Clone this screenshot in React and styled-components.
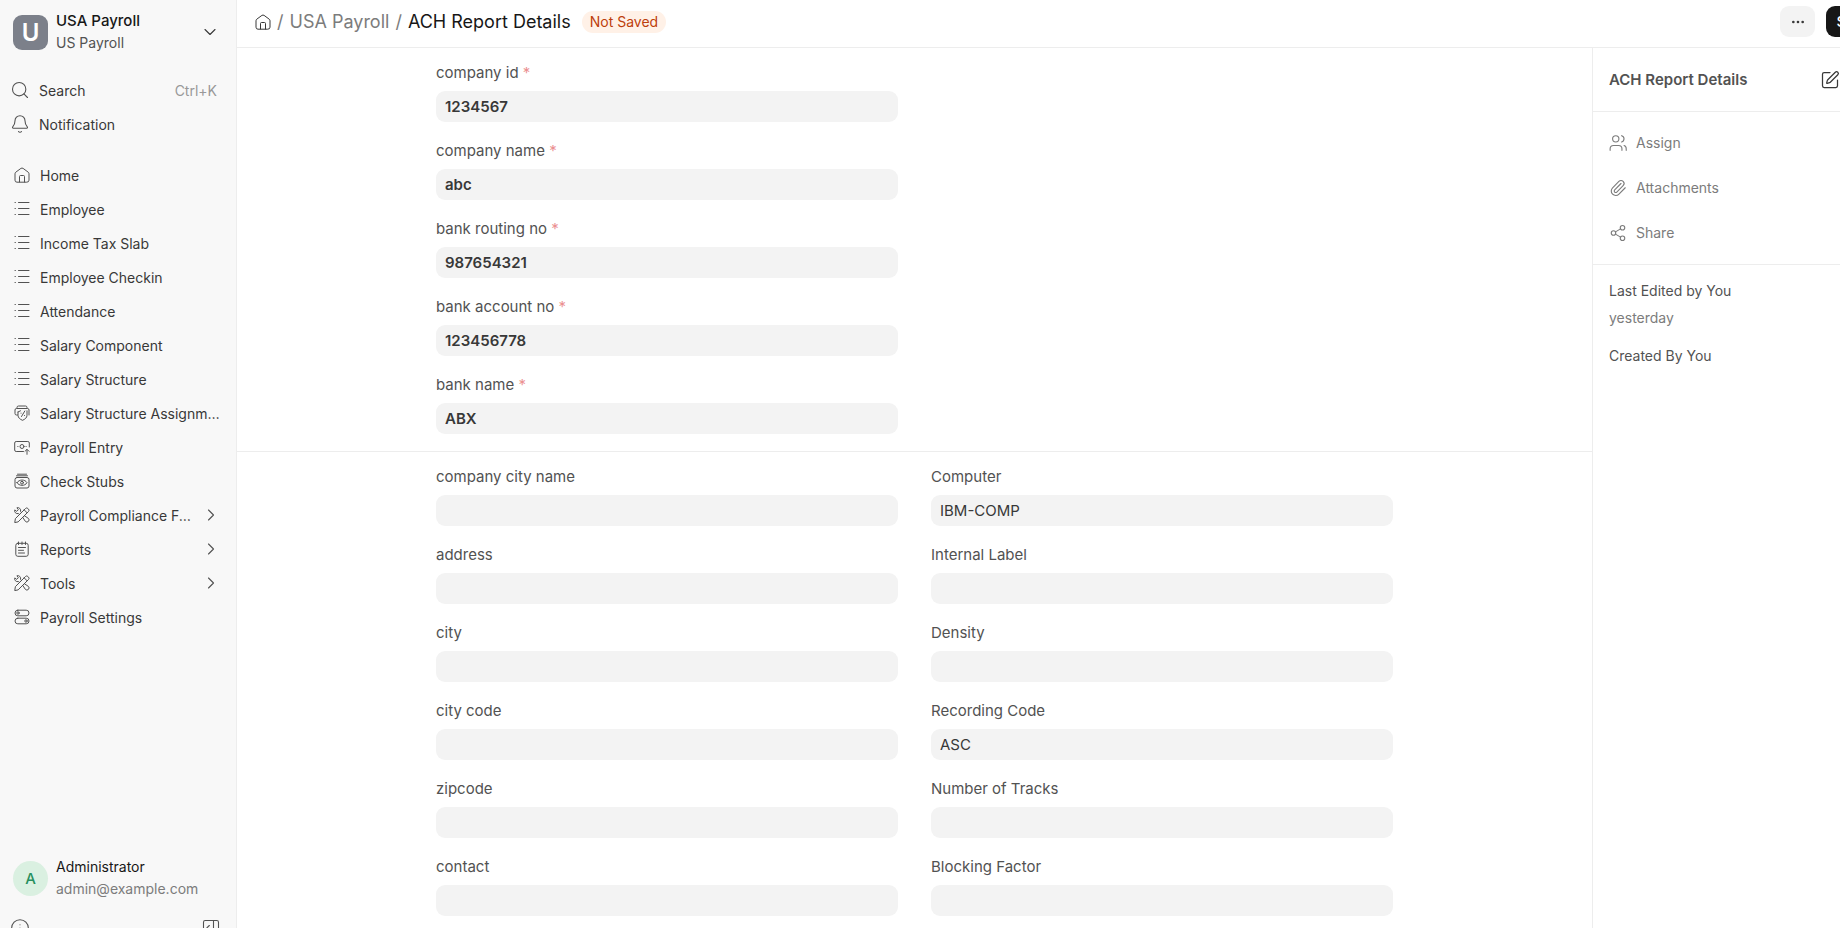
import styled, { createGlobalStyle } from "styled-components";
import { useState } from "react";
import {
  Bell,
  ChevronDown,
  ChevronRight,
  Ellipsis,
  Info,
  PanelRightOpen,
  Paperclip,
  Search,
  Share2,
  SquarePen,
} from "lucide-react";

const GlobalStyle = createGlobalStyle`
  *,
  *::before,
  *::after {
    box-sizing: border-box;
  }

  body {
    margin: 0;
    background: #fff;
    color: #383838;
    font-family: Inter, "Liberation Sans", sans-serif;
    font-size: 14px;
    overflow: hidden;
  }

  button,
  input {
    font: inherit;
    color: inherit;
  }

  button {
    border: 0;
    padding: 0;
    background: none;
    cursor: pointer;
    text-align: left;
  }

  a {
    color: inherit;
    text-decoration: none;
  }
`;

const Layout = styled.div`
  display: flex;
  height: 100vh;
  overflow: hidden;
`;

/* ---------- sidebar ---------- */

const Sidebar = styled.aside`
  display: flex;
  flex-direction: column;
  flex: 0 0 237px;
  background: #f8f8f8;
  border-right: 1px solid #ededed;
  overflow: hidden;
`;

const Account = styled.button`
  display: flex;
  align-items: center;
  gap: 8px;
  flex: none;
  padding: 0 16px 0 13px;
`;

const WorkspaceSwitch = styled(Account)`
  padding-top: 10px;
  margin-bottom: 19px;
`;

const UserButton = styled(Account)`
  margin-top: auto;
  margin-bottom: 18px;
`;

const Logo = styled.span`
  display: grid;
  place-items: center;
  flex: none;
  width: 35px;
  height: 35px;
  border-radius: 9px;
  background: #7c808a;
  color: #fff;
  font-size: 24px;
  font-weight: 600;
`;

const Avatar = styled(Logo)`
  border-radius: 50%;
  background: #daf0e1;
  color: #278f5e;
  font-size: 15px;
  font-weight: 500;
`;

const AccountText = styled.span`
  display: flex;
  flex-direction: column;
  flex: 1;
  line-height: 22px;
`;

const AccountName = styled.span`
  font-size: ${(props) => (props.$large ? 15 : 14)}px;
  font-weight: ${(props) => (props.$large ? 450 : 400)};
  color: #171717;
`;

const AccountInfo = styled.span`
  color: ${(props) => (props.$muted ? "#7c7c7c" : "#525252")};
`;

const NavList = styled.ul`
  list-style: none;
  margin: 0;
  padding: 0;
`;

const MainNav = styled(NavList)`
  margin-top: 17px;
`;

const NavItem = styled.a`
  display: flex;
  align-items: center;
  gap: 10px;
  height: 34px;
  padding: 0 15px 0 14px;

  svg {
    flex: none;
    color: #525252;
  }
`;

const NavButton = styled(NavItem)`
  gap: 9px;
  width: 100%;
  padding: 0 19px 0 10px;
`;

const NavLabel = styled.span`
  flex: 1;
  overflow: hidden;
  white-space: nowrap;
  text-overflow: ellipsis;
`;

const Shortcut = styled.kbd`
  font: inherit;
  color: #999;
`;

const SidebarFooter = styled.div`
  display: flex;
  justify-content: space-between;
  flex: none;
  height: 10px;
  padding: 0 15px 0 10px;
  color: #525252;
`;

/* ---------- page ---------- */

const Page = styled.div`
  display: flex;
  flex-direction: column;
  flex: 1;
  min-width: 0;
`;

const Header = styled.header`
  display: flex;
  align-items: center;
  flex: none;
  height: 48px;
  padding: 0 0 4px 18px;
  border-bottom: 1px solid #ededed;
`;

const Breadcrumbs = styled.nav`
  display: flex;
  align-items: center;
  gap: 6px;
  font-size: 18px;
  color: #7c7c7c;

  a {
    display: flex;
  }

  svg {
    color: #383838;
  }
`;

const Current = styled.span`
  color: #171717;
`;

const Status = styled.span`
  margin-left: 11px;
  padding: 0 8px;
  border-radius: 11px;
  background: #fff1e7;
  color: #bd3e0c;
  font-size: 14px;
  line-height: 22px;
`;

const Actions = styled.div`
  display: flex;
  gap: 11px;
  margin-left: auto;
  /* the save button runs past the edge of the window */
  margin-right: -42px;
`;

const MenuButton = styled.button`
  display: grid;
  place-items: center;
  width: 35px;
  height: 31px;
  border-radius: 9px;
  background: #f3f3f3;
`;

const SaveButton = styled(MenuButton)`
  width: 56px;
  background: #171717;
  color: #fff;
  font-size: 15px;
  font-weight: 500;
`;

const Body = styled.div`
  display: flex;
  flex: 1;
  min-height: 0;
`;

const Form = styled.form`
  flex: 1;
  min-width: 0;
  overflow: hidden;
`;

const Section = styled.section`
  padding: 14px 24px 17px;

  & + & {
    border-top: 1px solid #ededed;
  }
`;

const Columns = styled.div`
  display: grid;
  grid-template-columns: 1fr 1fr;
  gap: 33px;
  max-width: 957px;
  margin: 0 auto;
`;

const Column = styled.div`
  display: flex;
  flex-direction: column;
  gap: 18px;
`;

const FieldBox = styled.div`
  display: flex;
  flex-direction: column;
  gap: 7px;
`;

const Label = styled.label`
  color: #525252;
  font-size: 15px;
  line-height: 22px;
`;

const Required = styled.span`
  color: #eb9091;
`;

const Input = styled.input`
  width: 100%;
  height: 31px;
  padding: 0 9px;
  border: 0;
  border-radius: 9px;
  outline: 0;
  background: #f3f3f3;
  font-size: 15px;
  font-weight: ${(props) => (props.required ? 600 : 400)};
`;

/* ---------- details ---------- */

const Details = styled.aside`
  flex: 0 0 248px;
  border-left: 1px solid #ededed;
  color: #525252;
`;

const DetailsHead = styled.div`
  display: flex;
  align-items: center;
  justify-content: space-between;
  height: 64px;
  padding-left: 16px;
  border-bottom: 1px solid #ededed;
`;

const EditButton = styled.button`
  display: flex;
  color: #383838;
`;

const DetailsTitle = styled.h2`
  margin: 0;
  font-size: 15px;
  font-weight: 600;
`;

const DetailsActions = styled.div`
  display: flex;
  flex-direction: column;
  gap: 23px;
  padding: 20px 16px;
  border-bottom: 1px solid #ededed;
`;

const DetailsAction = styled.button`
  display: flex;
  align-items: center;
  gap: 9px;
  line-height: 22px;
  color: #7c7c7c;
`;

const History = styled.div`
  padding: 12px 16px;
  line-height: 27px;

  p {
    margin: 0 0 11px;
  }
`;

const Time = styled.time`
  display: block;
  color: #7c7c7c;
`;

/* ---------- icons ---------- */

function Icon({ size = 16, children }) {
  return (
    <svg
      width={size}
      height={size}
      viewBox="0 0 16 16"
      fill="none"
      stroke="currentColor"
      strokeLinecap="round"
      strokeLinejoin="round"
      aria-hidden="true"
    >
      {children}
    </svg>
  );
}

const HomeIcon = () => (
  <Icon>
    <path d="M5.5 15.2H3a2 2 0 0 1-2-2V6.8a2 2 0 0 1 .9-1.7l5-3.7a2 2 0 0 1 2.2 0l5 3.7a2 2 0 0 1 .9 1.7v6.4a2 2 0 0 1-2 2z" />
    <path d="M5.5 15V9.5a1 1 0 0 1 1-1h3a1 1 0 0 1 1 1V15" />
  </Icon>
);

const ListIcon = () => (
  <Icon>
    <path d="M4.5 1.5H15M4.5 7.5H15M4.5 13.5H15" />
    <path d="M1 1.5h.4M1 7.5h.4M1 13.5h.4" />
  </Icon>
);

const AssignmentIcon = () => (
  <Icon>
    <path d="M3 3.2v-.7A1.5 1.5 0 0 1 4.5 1h7A1.5 1.5 0 0 1 13 2.5v.7" />
    <path d="M3.5 10h-1A1.5 1.5 0 0 1 1 8.5V5a1.5 1.5 0 0 1 1.5-1.5h11A1.5 1.5 0 0 1 15 5v5" />
    <path d="M4 7l2.500-1.200M13 5.800v4.500c0 2.400-2 4-4.500 5-2.500-1-4.500-2.600-4.500-5V7" />
    <path d="M7.500 11.500L10.800 6M7 8.200h.1M10.500 10.500h.1" />
  </Icon>
);

const PayrollIcon = () => (
  <Icon>
    <path d="M9.5 12.5H2.2A1.5 1.5 0 0 1 .7 11V4a1.5 1.5 0 0 1 1.5-1.5h11.6A1.5 1.5 0 0 1 15.3 4v4" />
    <circle cx="8" cy="7.5" r="2" />
    <path d="M3.8 7.5H4M12 7.5h.2M13 15.3v-4.8M11 12.3l2-2 2 2" />
  </Icon>
);

const StubsIcon = () => (
  <Icon>
    <rect x="1" y="4.5" width="14" height="10.5" rx="2" />
    <path d="M2.5 2.8h11M3.5 1.2h9" />
    <path d="M3 9.7c2-3.6 8-3.6 10 0-2 3.6-8 3.6-10 0z" />
    <circle cx="8" cy="9.7" r="1.4" />
  </Icon>
);

const ToolsIcon = () => (
  <Icon>
    <path d="M.8 15.2l.6-3.6L11.5 1.5a1.7 1.7 0 0 1 2.4 0l.6.6a1.7 1.7 0 0 1 0 2.4L4.4 14.6zM10.2 2.9l2.9 2.9" />
    <path d="M5.5 7.4l-1.2-.9A2.8 2.8 0 0 1 .8 2.9l1.900 1.500 1.700-1.700L2.900.8a2.800 2.800 0 0 1 3.600 3.500l.9 1.200" />
    <path d="M8.700 10.400l2.700 4a2.100 2.100 0 1 0 3-3l-4-2.700" />
  </Icon>
);

const ReportIcon = () => (
  <Icon>
    <rect x="1.8" y="2.3" width="12.4" height="13" rx="2" />
    <path d="M4.5 1v2.5M8 1v2.5M11.5 1v2.5M4.5 6.5h7M4.5 9.3h5M4.5 12h6" />
  </Icon>
);

const SettingsIcon = () => (
  <Icon>
    <rect x="1" y="1.2" width="14" height="5.6" rx="2.8" />
    <rect x="1" y="9.2" width="14" height="5.6" rx="2.8" />
    <circle cx="4" cy="4" r="1.2" />
    <circle cx="12" cy="12" r="1.2" />
  </Icon>
);

const UsersIcon = () => (
  <Icon size={18}>
    <circle cx="6" cy="4.3" r="2.8" />
    <path d="M1 14.5v-1.3a3 3 0 0 1 3-3h4.5a3 3 0 0 1 3 3v1.3M11.2 1.5a2.9 2.9 0 0 1 0 5.6M13.4 10.3a2.9 2.9 0 0 1 1.9 2.9v1.3" />
  </Icon>
);

/* ---------- data ---------- */

const navItems = [
  { label: "Home", icon: HomeIcon },
  { label: "Employee", icon: ListIcon },
  { label: "Income Tax Slab", icon: ListIcon },
  { label: "Employee Checkin", icon: ListIcon },
  { label: "Attendance", icon: ListIcon },
  { label: "Salary Component", icon: ListIcon },
  { label: "Salary Structure", icon: ListIcon },
  { label: "Salary Structure Assignment", icon: AssignmentIcon },
  { label: "Payroll Entry", icon: PayrollIcon },
  { label: "Check Stubs", icon: StubsIcon },
  { label: "Payroll Compliance Forms", icon: ToolsIcon, nested: true },
  { label: "Reports", icon: ReportIcon, nested: true },
  { label: "Tools", icon: ToolsIcon, nested: true },
  { label: "Payroll Settings", icon: SettingsIcon },
];

const companyFields = [
  { label: "company id", value: "1234567", required: true },
  { label: "company name", value: "abc", required: true },
  { label: "bank routing no", value: "987654321", required: true },
  { label: "bank account no", value: "123456778", required: true },
  { label: "bank name", value: "ABX", required: true },
];

const addressFields = [
  { label: "company city name" },
  { label: "address" },
  { label: "city" },
  { label: "city code" },
  { label: "zipcode" },
  { label: "contact" },
];

const recordFields = [
  { label: "Computer", value: "IBM-COMP" },
  { label: "Internal Label" },
  { label: "Density" },
  { label: "Recording Code", value: "ASC" },
  { label: "Number of Tracks" },
  { label: "Blocking Factor" },
];

function Field({ label, value = "", required }) {
  const [text, setText] = useState(value);
  const id = label.toLowerCase().replaceAll(" ", "-");

  return (
    <FieldBox>
      <Label htmlFor={id}>
        {label} {required && <Required>*</Required>}
      </Label>
      <Input
        id={id}
        type="text"
        required={required}
        value={text}
        onChange={(e) => setText(e.target.value)}
      />
    </FieldBox>
  );
}

function FieldColumn({ fields }) {
  return (
    <Column>
      {fields.map((field) => (
        <Field key={field.label} {...field} />
      ))}
    </Column>
  );
}

function AppSidebar() {
  return (
    <Sidebar>
      <WorkspaceSwitch type="button">
        <Logo>U</Logo>
        <AccountText>
          <AccountName $large>USA Payroll</AccountName>
          <AccountInfo>US Payroll</AccountInfo>
        </AccountText>
        <ChevronDown size={20} strokeWidth={1.3} />
      </WorkspaceSwitch>

      <NavList>
        <li>
          <NavButton as="button" type="button">
            <Search size={20} strokeWidth={1.3} />
            <NavLabel>Search</NavLabel>
            <Shortcut>Ctrl+K</Shortcut>
          </NavButton>
        </li>
        <li>
          <NavButton as="button" type="button">
            <Bell size={20} strokeWidth={1.3} />
            <NavLabel>Notification</NavLabel>
          </NavButton>
        </li>
      </NavList>

      <MainNav>
        {navItems.map(({ label, icon: ItemIcon, nested }) => (
          <li key={label}>
            <NavItem href="#">
              <ItemIcon />
              <NavLabel>{label}</NavLabel>
              {nested && <ChevronRight size={20} strokeWidth={1.3} />}
            </NavItem>
          </li>
        ))}
      </MainNav>

      <UserButton type="button">
        <Avatar>A</Avatar>
        <AccountText>
          <AccountName>Administrator</AccountName>
          <AccountInfo $muted>admin@example.com</AccountInfo>
        </AccountText>
      </UserButton>
      <SidebarFooter>
        <Info size={20} strokeWidth={1.3} />
        <PanelRightOpen size={20} strokeWidth={1.3} />
      </SidebarFooter>
    </Sidebar>
  );
}

function DetailsPanel() {
  return (
    <Details>
      <DetailsHead>
        <DetailsTitle>ACH Report Details</DetailsTitle>
        <EditButton type="button" aria-label="Edit title">
          <SquarePen size={20} strokeWidth={1.5} />
        </EditButton>
      </DetailsHead>
      <DetailsActions>
        <DetailsAction type="button">
          <UsersIcon />
          Assign
        </DetailsAction>
        <DetailsAction type="button">
          <Paperclip size={18} strokeWidth={1.5} />
          Attachments
        </DetailsAction>
        <DetailsAction type="button">
          <Share2 size={18} strokeWidth={1.5} />
          Share
        </DetailsAction>
      </DetailsActions>
      <History>
        <p>
          Last Edited by You
          <Time>yesterday</Time>
        </p>
        <p>Created By You</p>
      </History>
    </Details>
  );
}

function App() {
  return (
    <>
      <GlobalStyle />
      <Layout>
        <AppSidebar />
        <Page>
          <Header>
            <Breadcrumbs aria-label="Breadcrumb">
              <a href="#" aria-label="Home">
                <HomeIcon />
              </a>
              <span>/</span>
              <a href="#">USA Payroll</a>
              <span>/</span>
              <Current>ACH Report Details</Current>
            </Breadcrumbs>
            <Status>Not Saved</Status>
            <Actions>
              <MenuButton type="button" aria-label="Menu">
                <Ellipsis size={16} />
              </MenuButton>
              <SaveButton type="button">Save</SaveButton>
            </Actions>
          </Header>

          <Body>
            <Form>
              <Section>
                <Columns>
                  <FieldColumn fields={companyFields} />
                </Columns>
              </Section>
              <Section>
                <Columns>
                  <FieldColumn fields={addressFields} />
                  <FieldColumn fields={recordFields} />
                </Columns>
              </Section>
            </Form>
            <DetailsPanel />
          </Body>
        </Page>
      </Layout>
    </>
  );
}

export default App;
